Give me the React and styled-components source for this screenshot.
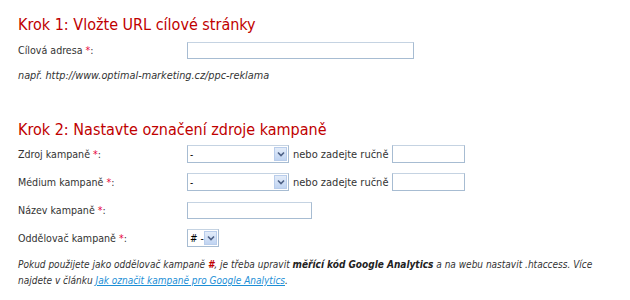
import styled, { createGlobalStyle } from "styled-components";

const Global = createGlobalStyle`
  body {
    margin: 0;
    background: #fff;
    font-family: "DejaVu Sans Condensed", "DejaVu Sans", sans-serif;
    color: #333;
  }
`;

const Wrapper = styled.div`
  width: 630px;
  height: 300px;
  padding: 15px 0 0 18px;
  box-sizing: border-box;
  overflow: hidden;
`;

const H2 = styled.h2`
  margin: ${(p) => p.$top || 0}px 0 0;
  font-size: 16px;
  line-height: 20px;
  font-weight: normal;
  color: #c00000;
`;

const Row = styled.div`
  display: flex;
  align-items: center;
  height: 18px;
  margin-top: ${(p) => p.$top || 10}px;
  font-size: 11px;
`;

const Label = styled.label`
  width: 169px;
  flex: none;
  font-size: 10.6px;
`;

const Star = styled.span`
  color: #e8003d;
`;

const Input = styled.input`
  box-sizing: border-box;
  width: ${(p) => p.$w}px;
  height: ${(p) => p.$h || 18}px;
  border: 1px solid #a7bcd2;
  border-top-color: #c5d3e2;
  padding: 0 2px;
  margin: 0;
  font: inherit;
  background: #fff;
`;

const SelectBox = styled.div`
  position: relative;
  box-sizing: border-box;
  width: ${(p) => p.$w}px;
  height: 18px;
  border: 1px solid #a7bcd2;
  border-top-color: #c5d3e2;
  background: #fff;
  font-size: 10px;
  color: #000;
  display: flex;
  align-items: center;
  padding-left: 2px;
  white-space: pre;
`;

const Arrow = styled.span`
  position: absolute;
  right: 1px;
  top: 1px;
  bottom: 1px;
  width: 13px;
  background: linear-gradient(#e3ecf9, #c0d4f2);
  border: 1px solid #b9cdeb;
  box-sizing: border-box;
  display: flex;
  align-items: center;
  justify-content: center;
`;

const Hint = styled.p`
  margin: 10px 0 0;
  font-size: 10.8px;
  line-height: 14px;
  font-style: italic;
  color: #333;
`;

const Between = styled.span`
  margin: 0 4px 0 4px;
  color: #333;
`;

const Note = styled.p`
  margin: 10px 0 0;
  width: 600px;
  font-size: 10px;
  line-height: 16px;
  font-style: italic;
  color: #333;
  b {
    color: #222;
  }
`;

const Hash = styled.b`
  color: #c00000 !important;
`;

const Link = styled.a`
  color: #1d8fd6;
  text-decoration: underline;
`;

function Select({ w, value }) {
  return (
    <SelectBox $w={w}>
      {value}
      <Arrow>
        <svg width="8" height="6" viewBox="0 0 8 6">
          <path d="M1 1.5 L4 4.5 L7 1.5" stroke="#4d6185" strokeWidth="1.6" fill="none" />
        </svg>
      </Arrow>
    </SelectBox>
  );
}

export default function App() {
  return (
    <>
      <Global />
      <Wrapper>
        <H2>Krok 1: Vložte URL cílové stránky</H2>
        <Row $top={6}>
          <Label>
            Cílová adresa <Star>*</Star>:
          </Label>
          <Input $w={227} $h={17} />
        </Row>
        <Hint>např. http://www.optimal-marketing.cz/ppc-reklama</Hint>

        <H2 $top={37}>Krok 2: Nastavte označení zdroje kampaně</H2>
        <Row $top={5}>
          <Label>
            Zdroj kampaně <Star>*</Star>:
          </Label>
          <Select w={102} value="-" />
          <Between>nebo zadejte ručně</Between>
          <Input $w={73} />
        </Row>
        <Row>
          <Label>
            Médium kampaně <Star>*</Star>:
          </Label>
          <Select w={102} value="-" />
          <Between>nebo zadejte ručně</Between>
          <Input $w={73} />
        </Row>
        <Row>
          <Label>
            Název kampaně <Star>*</Star>:
          </Label>
          <Input $w={125} $h={17} />
        </Row>
        <Row>
          <Label>
            Oddělovač kampaně <Star>*</Star>:
          </Label>
          <Select w={32} value="# -" />
        </Row>
        <Note>
          Pokud použijete jako oddělovač kampaně <Hash>#</Hash>, je třeba upravit{" "}
          <b>měřící kód Google Analytics</b> a na webu nastavit .htaccess. Více
          najdete v článku <Link href="#">Jak označit kampaně pro Google Analytics</Link>.
        </Note>
      </Wrapper>
    </>
  );
}
